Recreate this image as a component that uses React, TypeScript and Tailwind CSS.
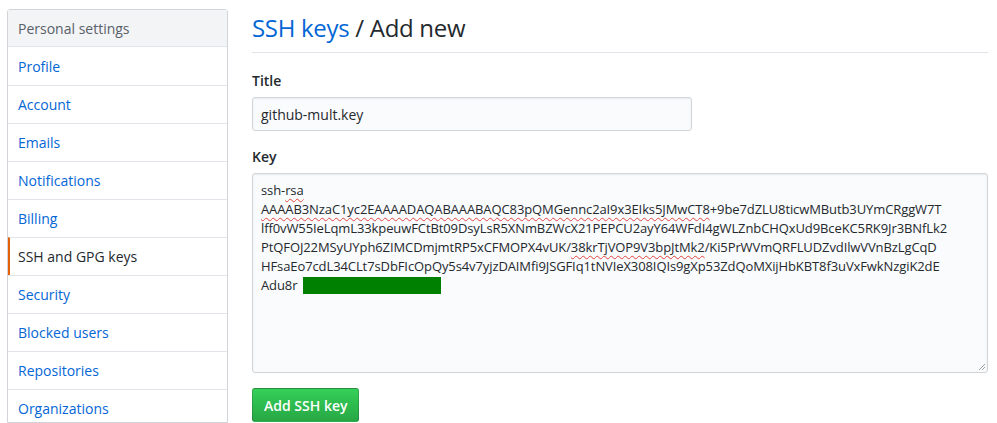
import React from 'react';

const NAV_ITEMS = [
    'Profile',
    'Account',
    'Emails',
    'Notifications',
    'Billing',
    'SSH and GPG keys',
    'Security',
    'Blocked users',
    'Repositories',
    'Organizations',
];

const ACTIVE = 'SSH and GPG keys';

const squiggle = 'underline decoration-wavy decoration-[#e0443e] decoration-1 underline-offset-[3px]';

const Sidebar: React.FC = () => (
    <nav className="w-[221px] shrink-0 border border-[#d1d5da] rounded-t-[3px] bg-white">
        <div className="h-[37px] flex items-center px-[10px] bg-[#f3f4f6] text-[14px] text-[#586069] border-b border-[#e1e4e8]">
            Personal settings
        </div>
        {NAV_ITEMS.map((item, i) => (
            <div
                key={item}
                className={`h-[38px] flex items-center text-[14px] ${
                    i > 0 ? 'border-t border-[#e1e4e8]' : ''
                } ${
                    item === ACTIVE
                        ? 'text-[#24292e] border-l-2 border-l-[#e36209] pl-[8px]'
                        : 'text-[#0366d6] pl-[10px]'
                }`}
            >
                {item}
            </div>
        ))}
    </nav>
);

const KeyText: React.FC = () => (
    <div className="leading-[19px] text-[13px] tracking-[-0.1px] text-[#24292e] whitespace-nowrap">
        <div>
            ssh-<span className={squiggle}>rsa</span>
        </div>
        <div>
            <span className={squiggle}>AAAAB3NzaC1yc2EAAAADAQABAAABAQC83pQMGennc2aI9x3EIks5JMwCT8</span>
            +9be7dZLU8ticwMButb3UYmCRggW7T
        </div>
        <div>lff0vW55IeLqmL33kpeuwFCtBt09DsyLsR5XNmBZWcX21PEPCU2ayY64WFdI4gWLZnbCHQxUd9BceKC5RK9Jr3BNfLk2</div>
        <div>
            PtQFOJ22MSyUYph6ZIMCDmjmtRP5xCFMOPX4vUK/
            <span className={squiggle}>38krTjVOP9V3bpJtMk2</span>
            /Ki5PrWVmQRFLUDZvdIlwVVnBzLgCqD
        </div>
        <div>HFsaEo7cdL34CLt7sDbFIcOpQy5s4v7yjzDAIMfi9JSGFIq1tNVIeX308IQIs9gXp53ZdQoMXijHbKBT8f3uVxFwkNzgiK2dE</div>
        <div className="flex items-center">
            Adu8r
            <span className="ml-[6px] inline-block w-[138px] h-[17px] bg-[#008000]" />
        </div>
    </div>
);

export default function App() {
    return (
        <div
            className="w-[997px] h-[423px] overflow-hidden bg-white flex gap-[24px] pl-[7px] pt-[9px]"
            style={{ fontFamily: '"Open Sans", "Noto Sans", Arial, sans-serif' }}
        >
            <Sidebar />
            <main className="w-[736px] shrink-0">
                <h2 className="text-[24px] tracking-[-0.3px] leading-[30px] pt-[4px] pb-[9px] border-b border-[#e1e4e8] text-[#24292e]">
                    <span className="text-[#0366d6]">SSH keys</span> / Add new
                </h2>
                <form className="pt-[18px]">
                    <label className="block text-[14px] font-semibold text-[#24292e] leading-[20px] mb-[6px]">
                        Title
                    </label>
                    <div className="w-[440px] h-[34px] flex items-center px-[8px] bg-[#fafbfc] border border-[#d1d5da] rounded-[3px] shadow-[inset_0_1px_2px_rgba(27,31,35,0.075)] text-[14px] text-[#24292e]">
                        github-mult.key
                    </div>
                    <label className="block text-[14px] font-semibold text-[#24292e] leading-[20px] mt-[16px] mb-[6px]">
                        Key
                    </label>
                    <div className="relative w-[736px] h-[200px] px-[8px] pt-[7px] bg-[#fafbfc] border border-[#d1d5da] rounded-[3px] shadow-[inset_0_1px_2px_rgba(27,31,35,0.075)] overflow-hidden">
                        <KeyText />
                        <svg className="absolute right-[1px] bottom-[1px]" width="9" height="9" viewBox="0 0 9 9">
                            <path d="M8 2L2 8M8 5L5 8" stroke="#9aa0a6" strokeWidth="1" />
                        </svg>
                    </div>
                    <button
                        type="button"
                        className="mt-[15px] h-[34px] px-[11px] rounded-[3px] border border-[rgba(27,31,35,0.2)] bg-gradient-to-b from-[#34d058] to-[#28a745] text-white text-[14px] font-semibold"
                    >
                        Add SSH key
                    </button>
                </form>
            </main>
        </div>
    );
}
